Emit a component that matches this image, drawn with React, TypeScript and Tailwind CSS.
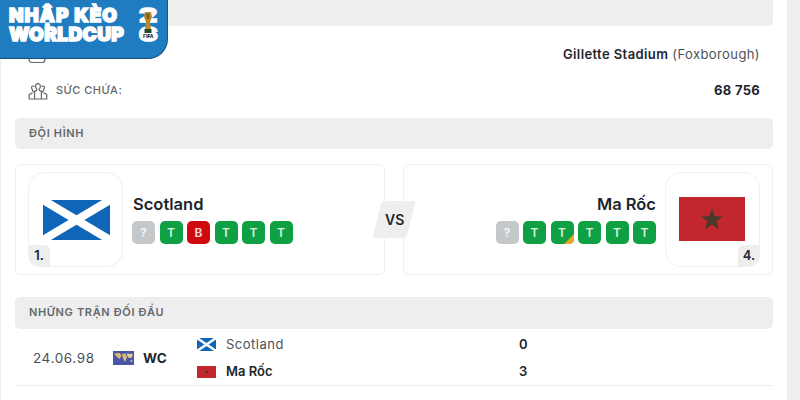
import React from "react";

const font = { fontFamily: "Inter, 'Noto Sans', sans-serif" };

const ScotlandFlag = ({ className }: { className: string }) => (
  <svg viewBox="0 0 66 40" className={className} preserveAspectRatio="none">
    <rect width="66" height="40" fill="#0f65b7" />
    <path d="M0 0L66 40M66 0L0 40" stroke="#fff" strokeWidth="8" />
  </svg>
);

const MoroccoFlag = ({ className, star = true }: { className: string; star?: boolean }) => (
  <svg viewBox="0 0 66 44" className={className} preserveAspectRatio="none">
    <rect width="66" height="44" fill="#c1272d" />
    {star ? (
      <path d="M33 11.500L35.800 19.300H44L37.500 24.200L39.800 32.500L33 27.600L26.200 32.500L28.500 24.200L22 19.300H30.200Z" fill="#4a3b2c" />
    ) : (
      <circle cx="33" cy="22" r="5" fill="#5c3a20" />
    )}
  </svg>
);

const WorldMapIcon = () => (
  <svg viewBox="0 0 21 14" className="w-[21px] h-[14px]">
    <rect width="21" height="14" fill="#4a55a6" />
    <path d="M1 2.500L7 2L8.500 5L6.500 8L4.500 6.500ZM9 3L12.500 2.500L14 6L12 11L10 7.500Z" fill="#d8bd72" />
    <path d="M13.500 2.500L20 3L18.500 7L15 6.500ZM17 9L19.500 9.500L18.500 11.500Z" fill="#e6cf8c" />
  </svg>
);

const PeopleIcon = () => (
  <svg viewBox="0 0 20 20" className="w-5 h-5" fill="none" stroke="#63686c" strokeWidth="1.200" strokeLinejoin="round">
    <path d="M7.600 5a2.400 2.400 0 1 1 4.800 0c0 1.300-.6 2.400-1.200 3v1.200l2.200 1.200V18H6.600V10.400l2.200-1.200V8C8.200 7.400 7.600 6.300 7.600 5Z" />
    <path d="M6.600 11.500 4.500 9.800V8.600c-.6-.4-1-1.200-1-2 0-1 .8-1.600 1.700-1.600.5 0 1 .2 1.300.500M6.600 18H1.200v-4.500l3.300-1.600" />
    <path d="M13.400 11.500 15.500 9.800V8.600c.6-.4 1-1.200 1-2 0-1-.8-1.600-1.700-1.600-.5 0-1 .2-1.300.500M13.400 18h5.400v-4.500l-3.300-1.600" />
  </svg>
);

const StadiumIcon = () => (
  <svg viewBox="0 0 20 20" className="w-5 h-5" fill="none" stroke="#63686c" strokeWidth="1.200">
    <rect x="1" y="3" width="16" height="15.500" rx="3" />
    <path d="M1 12h16" />
  </svg>
);

const FormBadge = ({ label, corner }: { label: string; corner?: boolean }) => {
  const colors: Record<string, string> = {
    "?": "bg-[#c5c8ca]",
    T: "bg-[#0ea043]",
    B: "bg-[#cf0a0f]",
  };
  return (
    <div
      className={`relative overflow-hidden w-[23px] h-[23px] rounded-[5px] flex items-center justify-center text-[12px] font-semibold text-white/85 ${colors[label]}`}
    >
      {label}
      {corner && (
        <div className="absolute right-[-7px] bottom-[-7px] w-[14px] h-[14px] rotate-45 bg-[#e8a823]" />
      )}
    </div>
  );
};

const SectionBar = ({ title, className }: { title: string; className: string }) => (
  <div className={`rounded-[5px] bg-[#eeeeee] flex items-center px-[14px] pb-px text-[11px] font-semibold tracking-[0.65px] text-[#63686c] ${className}`}>
    {title}
  </div>
);

const TeamLogo = ({ rank, side, children }: { rank: string; side: "left" | "right"; children: React.ReactNode }) => (
  <div className="relative w-[95px] h-[95px] rounded-[16px] border border-[#f0f0f0] flex items-center justify-center shrink-0">
    {children}
    <div
      className={`absolute -bottom-px w-[22px] h-[22px] bg-[#eeeeee] flex items-center justify-center text-[13px] font-semibold text-[#1d262c] ${
        side === "left" ? "-left-px rounded-bl-[12px] rounded-tr-[5px]" : "-right-px rounded-br-[12px] rounded-tl-[5px]"
      }`}
    >
      {rank}
    </div>
  </div>
);

const Logo = () => (
  <div className="absolute left-0 top-0 w-[168px] h-[59px] bg-[#1f7cc0] rounded-br-[20px] border-b border-r border-[#15527f] overflow-hidden">
    <div className="absolute left-[9px] top-[6px] text-white font-black leading-[19px] whitespace-nowrap [-webkit-text-stroke:1.500px_white]">
      <div className="text-[19px] tracking-[1px]">NHẬP KÈO</div>
      <div className="text-[19px] tracking-[0.4px]">WORLDCUP</div>
    </div>
    <div className="absolute left-[137px] top-[6px] w-[23px] flex flex-col items-center text-white font-black leading-[19px] text-[19px] [-webkit-text-stroke:1.500px_white]">
      <div className="scale-x-[1.450]">2</div>
      <div className="scale-x-[1.450]">6</div>
    </div>
    <svg viewBox="0 0 10 23" className="absolute left-[143px] top-[11px] w-[10px] h-[23px]">
      <path d="M2 1h6l1 5-2 5 1 8H2l1-8-2-5Z" fill="#b8892b" />
      <path d="M3 2.500h3.500L6 8H4Z" fill="#7a5a1c" />
      <rect x="1.500" y="18" width="7" height="4" fill="#244a2c" />
    </svg>
    <div className="absolute left-[143px] top-[33px] w-[10px] text-center text-[5px] leading-[6px] font-bold text-[#1d262c]">FIFA</div>
  </div>
);

export default function App() {
  return (
    <div className="relative w-[800px] h-[400px] overflow-hidden bg-[#eeeeee] pl-px pr-[13px]" style={font}>
      <div className="h-full bg-white pl-[14px] pr-[14px]">
        <div className="h-[26px] rounded-b-[5px] bg-[#eeeeee]" />

        <div className="flex items-center justify-between h-[56px] pl-[13px] pr-[13px]">
          <StadiumIcon />
          <div className="text-[13px] text-[#4b5257] tracking-[0.4px] pt-[1px]">
            <span className="font-semibold text-[#1d262c]">Gillette Stadium</span> (Foxborough)
          </div>
        </div>
        <div className="flex items-center justify-between h-[18px] pl-[13px] pr-[13px]">
          <div className="flex items-center gap-2">
            <PeopleIcon />
            <span className="text-[11px] font-medium text-[#63686c] tracking-[0.5px] pb-px">SỨC CHỨA:</span>
          </div>
          <span className="text-[13px] font-bold text-[#1d262c] tracking-[0.3px]">68 756</span>
        </div>

        <div className="h-[18px]" />
        <SectionBar title="ĐỘI HÌNH" className="h-[31px]" />

        <div className="flex items-center mt-[15px] h-[111px]">
          <div className="w-[370px] shrink-0 h-full rounded-[5px] border border-[#f0f0f0] flex items-center pl-[12px] gap-[10px]">
            <TeamLogo rank="1." side="left">
              <ScotlandFlag className="w-[67px] h-[40px] ml-[2px]" />
            </TeamLogo>
            <div className="flex flex-col gap-[6px] pb-[2px]">
              <div className="text-[16.500px] leading-[22px] font-semibold text-[#1d262c]">Scotland</div>
              <div className="flex gap-[4.500px] -ml-px">
                {["?", "T", "B", "T", "T", "T"].map((f, i) => (
                  <FormBadge key={i} label={f} />
                ))}
              </div>
            </div>
          </div>

          <div className="w-[18px] shrink-0 flex justify-center z-10">
            <div className="w-[34px] h-[37px] shrink-0 -skew-x-[14deg] rounded-[3px] bg-[#eeeeee] flex items-center justify-center">
              <span className="skew-x-[14deg] ml-px text-[14px] font-semibold text-[#1d262c]">VS</span>
            </div>
          </div>

          <div className="w-[370px] shrink-0 h-full rounded-[5px] border border-[#f0f0f0] flex items-center justify-end pr-[12px] gap-[9px]">
            <div className="flex flex-col items-end gap-[6px] pb-[2px]">
              <div className="text-[16.500px] leading-[22px] font-semibold text-[#1d262c]">Ma Rốc</div>
              <div className="flex gap-[4.500px]">
                {["?", "T", "C", "T", "T", "T"].map((f, i) =>
                  f === "C" ? <FormBadge key={i} label="T" corner /> : <FormBadge key={i} label={f} />
                )}
              </div>
            </div>
            <TeamLogo rank="4." side="right">
              <MoroccoFlag className="w-[66px] h-[44px] mr-[2px] mb-[2px]" />
            </TeamLogo>
          </div>
        </div>

        <div className="h-[22px]" />
        <SectionBar title="NHỮNG TRẬN ĐỐI ĐẦU" className="h-[32px]" />

        <div className="flex items-center h-[57px] border-b border-[#eeeeee] pl-[18px] pt-[2px] text-[13px]">
          <div className="w-[80px] text-[13.500px] text-[#4b5257] tracking-[0.6px]">24.06.98</div>
          <WorldMapIcon />
          <div className="ml-[9px] w-[54px] text-[13.500px] font-bold text-[#1d262c]">WC</div>
          <div className="flex flex-col gap-[9px] w-[340px]">
            <div className="flex items-center h-[18px]">
              <ScotlandFlag className="w-[19px] h-[13px]" />
              <span className="ml-[10px] w-[293px] text-[#4b5257] tracking-[0.5px]">Scotland</span>
              <span className="font-semibold text-[#1d262c]">0</span>
            </div>
            <div className="flex items-center h-[18px]">
              <MoroccoFlag className="w-[19px] h-[12px]" star={false} />
              <span className="ml-[10px] w-[293px] font-semibold text-[#1d262c]">Ma Rốc</span>
              <span className="font-semibold text-[#1d262c]">3</span>
            </div>
          </div>
        </div>
      </div>
      <Logo />
    </div>
  );
}
